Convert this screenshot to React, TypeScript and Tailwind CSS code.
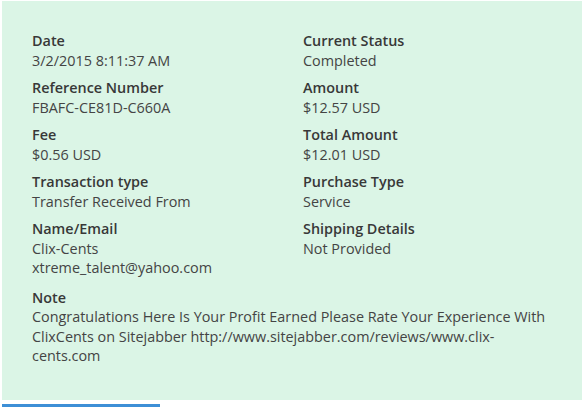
const rows: [string, string[], string, string[]][] = [
    ['Date', ['3/2/2015 8:11:37 AM'], 'Current Status', ['Completed']],
    ['Reference Number', ['FBAFC-CE81D-C660A'], 'Amount', ['$12.57 USD']],
    ['Fee', ['$0.56 USD'], 'Total Amount', ['$12.01 USD']],
    ['Transaction type', ['Transfer Received From'], 'Purchase Type', ['Service']],
    ['Name/Email', ['Clix-Cents', 'xtreme_talent@yahoo.com'], 'Shipping Details', ['Not Provided']],
];

function Field({ label, values }: { label: string; values: string[] }) {
    return (
        <div>
            <div className="font-semibold text-[#383838]">{label}</div>
            {values.map((v) => (
                <div key={v}>{v}</div>
            ))}
        </div>
    );
}

export default function App() {
    return (
        <div
            className="w-[585px] h-[407px] bg-white pt-[1px] text-[14.4px] leading-[19.5px] text-[#444]"
            style={{ fontFamily: '"Open Sans", sans-serif' }}
        >
            <div className="mx-[2px] w-[580px] h-[399px] bg-[#dbf5e6] pt-[30px] pl-[30px] pr-[32px]">
                <div className="flex flex-col gap-[8px]">
                    {rows.map(([l1, v1, l2, v2]) => (
                        <div key={l1} className="grid grid-cols-[271px_1fr]">
                            <Field label={l1} values={v1} />
                            <Field label={l2} values={v2} />
                        </div>
                    ))}
                    <div className="mt-[2px]">
                        <div className="font-semibold text-[#383838]">Note</div>
                        <div>
                            Congratulations Here Is Your Profit Earned Please Rate Your Experience With ClixCents on
                            Sitejabber http://www.sitejabber.com/reviews/www.clix-cents.com
                        </div>
                    </div>
                </div>
            </div>
            <div className="mx-[2px] mt-[4px] w-[158px] h-[3px] bg-[#3d8fd6]" />
        </div>
    );
}
